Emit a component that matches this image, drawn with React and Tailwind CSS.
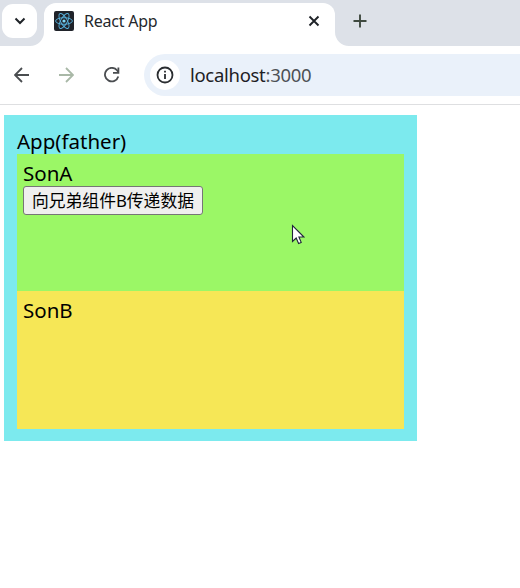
function ReactLogo() {
  return (
    <svg viewBox="0 0 20 20" className="h-5 w-5 shrink-0">
      <rect width="20" height="20" rx="2" fill="#20232a" />
      <g fill="none" stroke="#58b4e0" strokeWidth="0.9">
        <ellipse cx="10" cy="10" rx="8.4" ry="3.3" />
        <ellipse cx="10" cy="10" rx="8.4" ry="3.3" transform="rotate(60 10 10)" />
        <ellipse cx="10" cy="10" rx="8.4" ry="3.3" transform="rotate(120 10 10)" />
      </g>
      <circle cx="10" cy="10" r="1.6" fill="#7fd8f5" />
    </svg>
  );
}

function TabStrip() {
  return (
    <header className="flex h-[46px] bg-[#dde1e8]">
      <button className="mt-1 ml-0.5 flex h-[34px] w-[35px] shrink-0 items-center justify-center rounded-[11px] bg-white">
        <svg viewBox="0 0 12 12" className="h-3 w-3" fill="none" stroke="#1f2328" strokeWidth="2">
          <path d="M1.5 3.5 6 8l4.5-4.5" />
        </svg>
      </button>
      <svg viewBox="0 0 14 14" className="-ml-[7px] h-[14px] w-[14px] shrink-0 self-end">
        <path d="M14 0A14 14 0 0 1 0 14H14Z" fill="white" />
      </svg>
      <div className="mt-[3px] flex w-[291px] shrink-0 items-center rounded-t-[12px] bg-white pb-[7px] pl-[10px]">
        <ReactLogo />
        <span className="ml-[10px] w-[200px] text-[16px] leading-5 tracking-[-0.22px] text-[#25282c]">React App</span>
        <svg viewBox="0 0 12 12" className="ml-[24px] h-3 w-3" fill="none" stroke="#1f2328" strokeWidth="1.9">
          <path d="m1.5 1.5 9 9m0-9-9 9" />
        </svg>
      </div>
      <svg viewBox="0 0 14 14" className="h-[14px] w-[14px] shrink-0 self-end">
        <path d="M0 0A14 14 0 0 0 14 14H0Z" fill="white" />
      </svg>
      <svg viewBox="0 0 14 14" className="mt-[14px] ml-1 h-[14px] w-[14px]" fill="none" stroke="#3f4a40" strokeWidth="1.9">
        <path d="M.5 7h13M7 .5v13" />
      </svg>
    </header>
  );
}

function Toolbar() {
  return (
    <nav className="flex h-[59px] items-center border-b border-[#dedfe1] bg-white">
      <svg viewBox="0 0 16 16" className="ml-[14px] h-4 w-4 shrink-0" fill="none" stroke="#4a4d50" strokeWidth="1.8">
        <path d="M15 8H1.5M8 1 1 8l7 7" />
      </svg>
      <svg viewBox="0 0 16 16" className="ml-[28px] h-4 w-4 shrink-0" fill="none" stroke="#a9b8a7" strokeWidth="1.8">
        <path d="M1 8h13.500M8 1l7 7-7 7" />
      </svg>
      <svg viewBox="0 0 16 16" className="ml-[30px] h-4 w-4 shrink-0" fill="none" stroke="#4a4d50" strokeWidth="1.8">
        <path d="M14.300 9.500A6.800 6.800 0 1 1 13 3.300L14.300 5" />
        <path d="M14.400.5v5.400H9" />
      </svg>
      <div className="ml-6 flex h-[42px] flex-1 items-center rounded-l-[21px] bg-[#eaf1fa] pl-1.5">
        <div className="flex h-[30px] w-[30px] items-center justify-center rounded-full bg-white">
          <svg viewBox="0 0 18 18" className="h-[18px] w-[18px]" fill="none" stroke="#2a2d30" strokeWidth="1.8">
            <circle cx="9" cy="9" r="7.500" />
            <path d="M9 8v5M9 4.800v1.800" />
          </svg>
        </div>
        <span className="ml-[10px] text-[18.500px] leading-6 tracking-[-0.3px] text-[#1d2024]">
          localhost<span className="text-[#4d5156]">:3000</span>
        </span>
      </div>
    </nav>
  );
}

export default function App() {
  return (
    <div className="relative h-[588px] w-[520px] overflow-hidden bg-white font-['Noto_Sans','Noto_Sans_CJK_SC',sans-serif]">
      <TabStrip />
      <Toolbar />
      <main className="mt-[10px] ml-1 h-[326px] w-[413px] bg-[#7ceaee] px-[13px] pt-[14px] text-[20.500px] leading-[24px] text-black">
        <div className="h-[25px]">App(father)</div>
        <section className="h-[137px] bg-[#9bf766] px-1.5 pt-[7px]">
          <div className="h-[25px]">SonA</div>
          <button className="flex h-[29px] w-[180px] items-center justify-center rounded-[3px] border border-[#767676] bg-[#efefef] pt-px text-[16.800px] leading-5 whitespace-nowrap">
            向兄弟组件B传递数据
          </button>
        </section>
        <section className="h-[138px] bg-[#f6e756] px-1.5 pt-[7px]">SonB</section>
      </main>
      <svg viewBox="0 0 14 21" className="absolute top-[224px] left-[291px] h-[21px] w-[14px]">
        <path d="M1.500 1.500V17.500L5.200 14l2.400 5.500 2.600-1.100L7.900 13h5Z" fill="white" stroke="#20253a" strokeWidth="1.100" />
      </svg>
    </div>
  );
}
